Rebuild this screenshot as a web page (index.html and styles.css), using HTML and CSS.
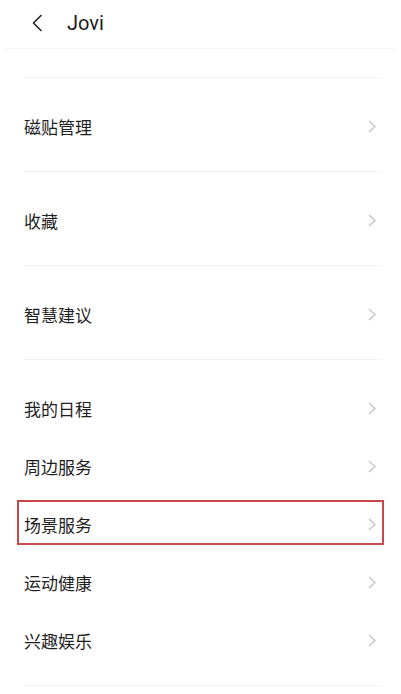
FILE: index.html
```html
<!DOCTYPE html>
<html lang="zh-CN">
<head>
<meta charset="utf-8">
<title>Jovi</title>
<link rel="stylesheet" href="styles.css">
</head>
<body>
<div class="screen">
  <header class="topbar">
    <svg class="back" width="12" height="18" viewBox="0 0 12 18" aria-hidden="true">
      <polyline points="10,1.5 2.5,9 10,16.5" fill="none" stroke="#222" stroke-width="1.6" stroke-linecap="round" stroke-linejoin="round"/>
    </svg>
    <span class="title">Jovi</span>
  </header>

  <div class="spacer"></div>

  <section class="group">
    <div class="row"><span>磁贴管理</span><svg class="chev" width="8" height="13" viewBox="0 0 8 13"><polyline points="1,1 7,6.5 1,12" fill="none" stroke="#c4c4c4" stroke-width="1.3"/></svg></div>
  </section>

  <section class="group">
    <div class="row"><span>收藏</span><svg class="chev" width="8" height="13" viewBox="0 0 8 13"><polyline points="1,1 7,6.5 1,12" fill="none" stroke="#c4c4c4" stroke-width="1.3"/></svg></div>
  </section>

  <section class="group">
    <div class="row"><span>智慧建议</span><svg class="chev" width="8" height="13" viewBox="0 0 8 13"><polyline points="1,1 7,6.5 1,12" fill="none" stroke="#c4c4c4" stroke-width="1.3"/></svg></div>
  </section>

  <section class="group">
    <div class="row"><span>我的日程</span><svg class="chev" width="8" height="13" viewBox="0 0 8 13"><polyline points="1,1 7,6.5 1,12" fill="none" stroke="#c4c4c4" stroke-width="1.3"/></svg></div>
    <div class="row"><span>周边服务</span><svg class="chev" width="8" height="13" viewBox="0 0 8 13"><polyline points="1,1 7,6.5 1,12" fill="none" stroke="#c4c4c4" stroke-width="1.3"/></svg></div>
    <div class="row marked"><span>场景服务</span><svg class="chev" width="8" height="13" viewBox="0 0 8 13"><polyline points="1,1 7,6.5 1,12" fill="none" stroke="#c4c4c4" stroke-width="1.3"/></svg></div>
    <div class="row"><span>运动健康</span><svg class="chev" width="8" height="13" viewBox="0 0 8 13"><polyline points="1,1 7,6.5 1,12" fill="none" stroke="#c4c4c4" stroke-width="1.3"/></svg></div>
    <div class="row"><span>兴趣娱乐</span><svg class="chev" width="8" height="13" viewBox="0 0 8 13"><polyline points="1,1 7,6.5 1,12" fill="none" stroke="#c4c4c4" stroke-width="1.3"/></svg></div>
  </section>
  <div class="endline"></div>
</div>
</body>
</html>
```

FILE: styles.css
```css
html, body {
  margin: 0;
  padding: 0;
  background: #fff;
}

.screen {
  width: 401px;
  height: 694px;
  overflow: hidden;
  font-family: "Noto Sans CJK SC", "Noto Sans", sans-serif;
  color: #222;
}

.topbar {
  height: 48px;
  display: flex;
  align-items: center;
  gap: 24px;
  padding-left: 25px;
  margin: 0 6px;
  border-bottom: 1px solid #f4f4f4;
  box-sizing: content-box;
}

.topbar .back {
  margin-top: -3px;
}

.title {
  font-family: Roboto, "Noto Sans", sans-serif;
  font-size: 20px;
  font-weight: 400;
  color: #1a1a1a;
  margin-top: -3px;
}

.spacer {
  height: 28px;
}

.group {
  margin: 0 19px 0 24px;
  border-top: 1px solid #f3f3f3;
  padding: 19px 0 16px;
}

.row {
  position: relative;
  height: 58px;
  display: flex;
  align-items: center;
  justify-content: space-between;
  padding-right: 6px;
  font-size: 17px;
  line-height: 1;
  color: #1f1f1f;
}

.row span {
  margin-top: 1px;
}

.chev {
  display: block;
}

/* highlighted entry */
.row.marked::after {
  content: "";
  position: absolute;
  left: -7px;
  right: -2px;
  top: 5px;
  bottom: 8px;
  border: 2px solid #c9484a;
  pointer-events: none;
}

.endline {
  margin: 0 19px 0 24px;
  border-top: 1px solid #f3f3f3;
}
```
